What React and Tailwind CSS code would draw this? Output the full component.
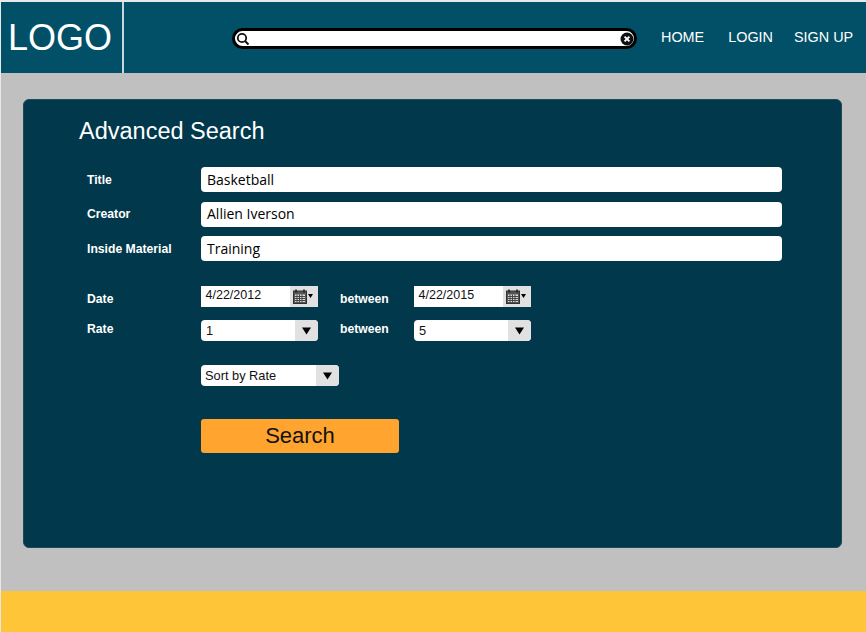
const sans = "font-['Liberation_Sans',Arial,sans-serif]";

const Caret = () => (
  <svg width="9" height="8" viewBox="0 0 9 8" className="block">
    <path d="M0 0.5h9L4.5 7.5z" fill="#000" />
  </svg>
);

const CalendarIcon = () => (
  <svg width="14" height="15" viewBox="0 0 14 15" className="block">
    <rect x="0.5" y="2" width="13" height="12.5" fill="#555" stroke="#333" />
    <rect x="2" y="5.5" width="10" height="7.5" fill="#ddd" />
    <path d="M3 0.5v3M11 0.5v3" stroke="#222" strokeWidth="1.6" />
    <path d="M2 7.5h10M2 9.5h10M2 11.5h10M4 5.5v8M6.5 5.5v8M9 5.5v8" stroke="#444" strokeWidth="1" />
  </svg>
);

const TextRow = ({ label, value }) => (
  <div className="flex items-center h-[25px]">
    <label className="w-[114px] text-[12.2px] font-bold text-white mt-[1px]">{label}</label>
    <div className="w-[581px] h-[25px] bg-white rounded-[4px] pl-[6px] flex items-center text-sm text-black font-['Open_Sans',sans-serif]">
      {value}
    </div>
  </div>
);

const DateBox = ({ value }) => (
  <div className="w-[117px] h-[21px] flex bg-white">
    <div className="flex-1 pl-[4.5px] pb-[2px] flex items-center text-[12.5px] text-[#111]">{value}</div>
    <div className="w-[28px] bg-[#e1e1e1] flex items-center gap-[1px] pl-[3px] pb-[1px]">
      <CalendarIcon />
      <svg width="5" height="4" viewBox="0 0 5 4" className="block">
        <path d="M0 0h5L2.5 4z" fill="#000" />
      </svg>
    </div>
  </div>
);

const SelectBox = ({ value, width, pad = "pl-[5px]" }) => (
  <div className={`${width} h-[21px] flex bg-white rounded-[4px] overflow-hidden`}>
    <div className={`${pad} flex-1 flex items-center text-[12.8px] text-[#111]`}>{value}</div>
    <div className="w-[23px] bg-[#e1e1e1] flex items-center justify-center">
      <Caret />
    </div>
  </div>
);

export default function App() {
  return (
    <div className={`w-[866px] h-[632px] flex flex-col pl-[1px] pt-[2px] bg-[#e8e8e8] overflow-hidden ${sans}`}>
      <header className="h-[71px] shrink-0 flex items-center bg-[#015068]">
        <div className="w-[123px] h-full border-r-2 border-[#c6d6dc] pl-[7px] flex items-center text-[36px] text-white">
          LOGO
        </div>
        <div className="ml-[108px] w-[405px] h-[21px] mt-[2px] flex items-center justify-between bg-white border-[3px] border-black rounded-full pl-[1px]">
          <svg width="14" height="14" viewBox="0 0 14 14" className="block">
            <circle cx="6" cy="6" r="4.2" fill="none" stroke="#111" strokeWidth="1.8" />
            <path d="M9 9l3.5 3.5" stroke="#111" strokeWidth="2" />
          </svg>
          <svg width="14" height="14" viewBox="0 0 14 14" className="block">
            <circle cx="7" cy="7" r="6.5" fill="#111" />
            <path d="M4.6 4.6l4.8 4.8M9.4 4.6l-4.8 4.8" stroke="#fff" strokeWidth="2" />
          </svg>
        </div>
        <nav className="ml-[24px] flex items-center text-[14.4px] text-white mt-[1px]">
          <a>HOME</a>
          <a className="ml-[24px]">LOGIN</a>
          <a className="ml-[21px]">SIGN UP</a>
        </nav>
      </header>

      <main className="h-[518px] shrink-0 bg-[#c0c0c0] pl-[22px] pt-[26px]">
        <section className="w-[819px] h-[449px] rounded-[6px] bg-[#01384b] border border-[#1b4a5b] pl-[55px] pt-[17px]">
          <h1 className="text-[23.5px] leading-[28px] text-white">Advanced Search</h1>

          <div className="mt-[22px] pl-[8px] flex flex-col gap-[9.5px]">
            <TextRow label="Title" value="Basketball" />
            <TextRow label="Creator" value="Allien Iverson" />
            <TextRow label="Inside Material" value="Training" />
          </div>

          <div className="mt-[25px] pl-[8px] flex h-[21px]">
            <label className="w-[114px] mt-[4px] text-[12.2px] font-bold text-white">Date</label>
            <DateBox value="4/22/2012" />
            <span className="w-[96px] ml-[22px] -mr-[22px] mt-[4px] text-[12.2px] font-bold text-white">between</span>
            <DateBox value="4/22/2015" />
          </div>

          <div className="mt-[13px] pl-[8px] flex h-[21px]">
            <label className="w-[114px] text-[12.2px] font-bold text-white">Rate</label>
            <SelectBox value="1" width="w-[117px]" />
            <span className="w-[96px] ml-[22px] -mr-[22px] text-[12.2px] font-bold text-white">between</span>
            <SelectBox value="5" width="w-[117px]" />
          </div>

          <div className="mt-[24px] pl-[122px]">
            <SelectBox value="Sort by Rate" width="w-[138px]" pad="pl-[4px]" />
          </div>

          <div className="mt-[33px] pl-[122px]">
            <button className="w-[198px] h-[34px] pb-[2px] rounded-[3px] bg-[#ffa52f] text-[22px] text-[#111]">Search</button>
          </div>
        </section>
      </main>

      <footer className="flex-1 bg-[#ffc539]" />
    </div>
  );
}
